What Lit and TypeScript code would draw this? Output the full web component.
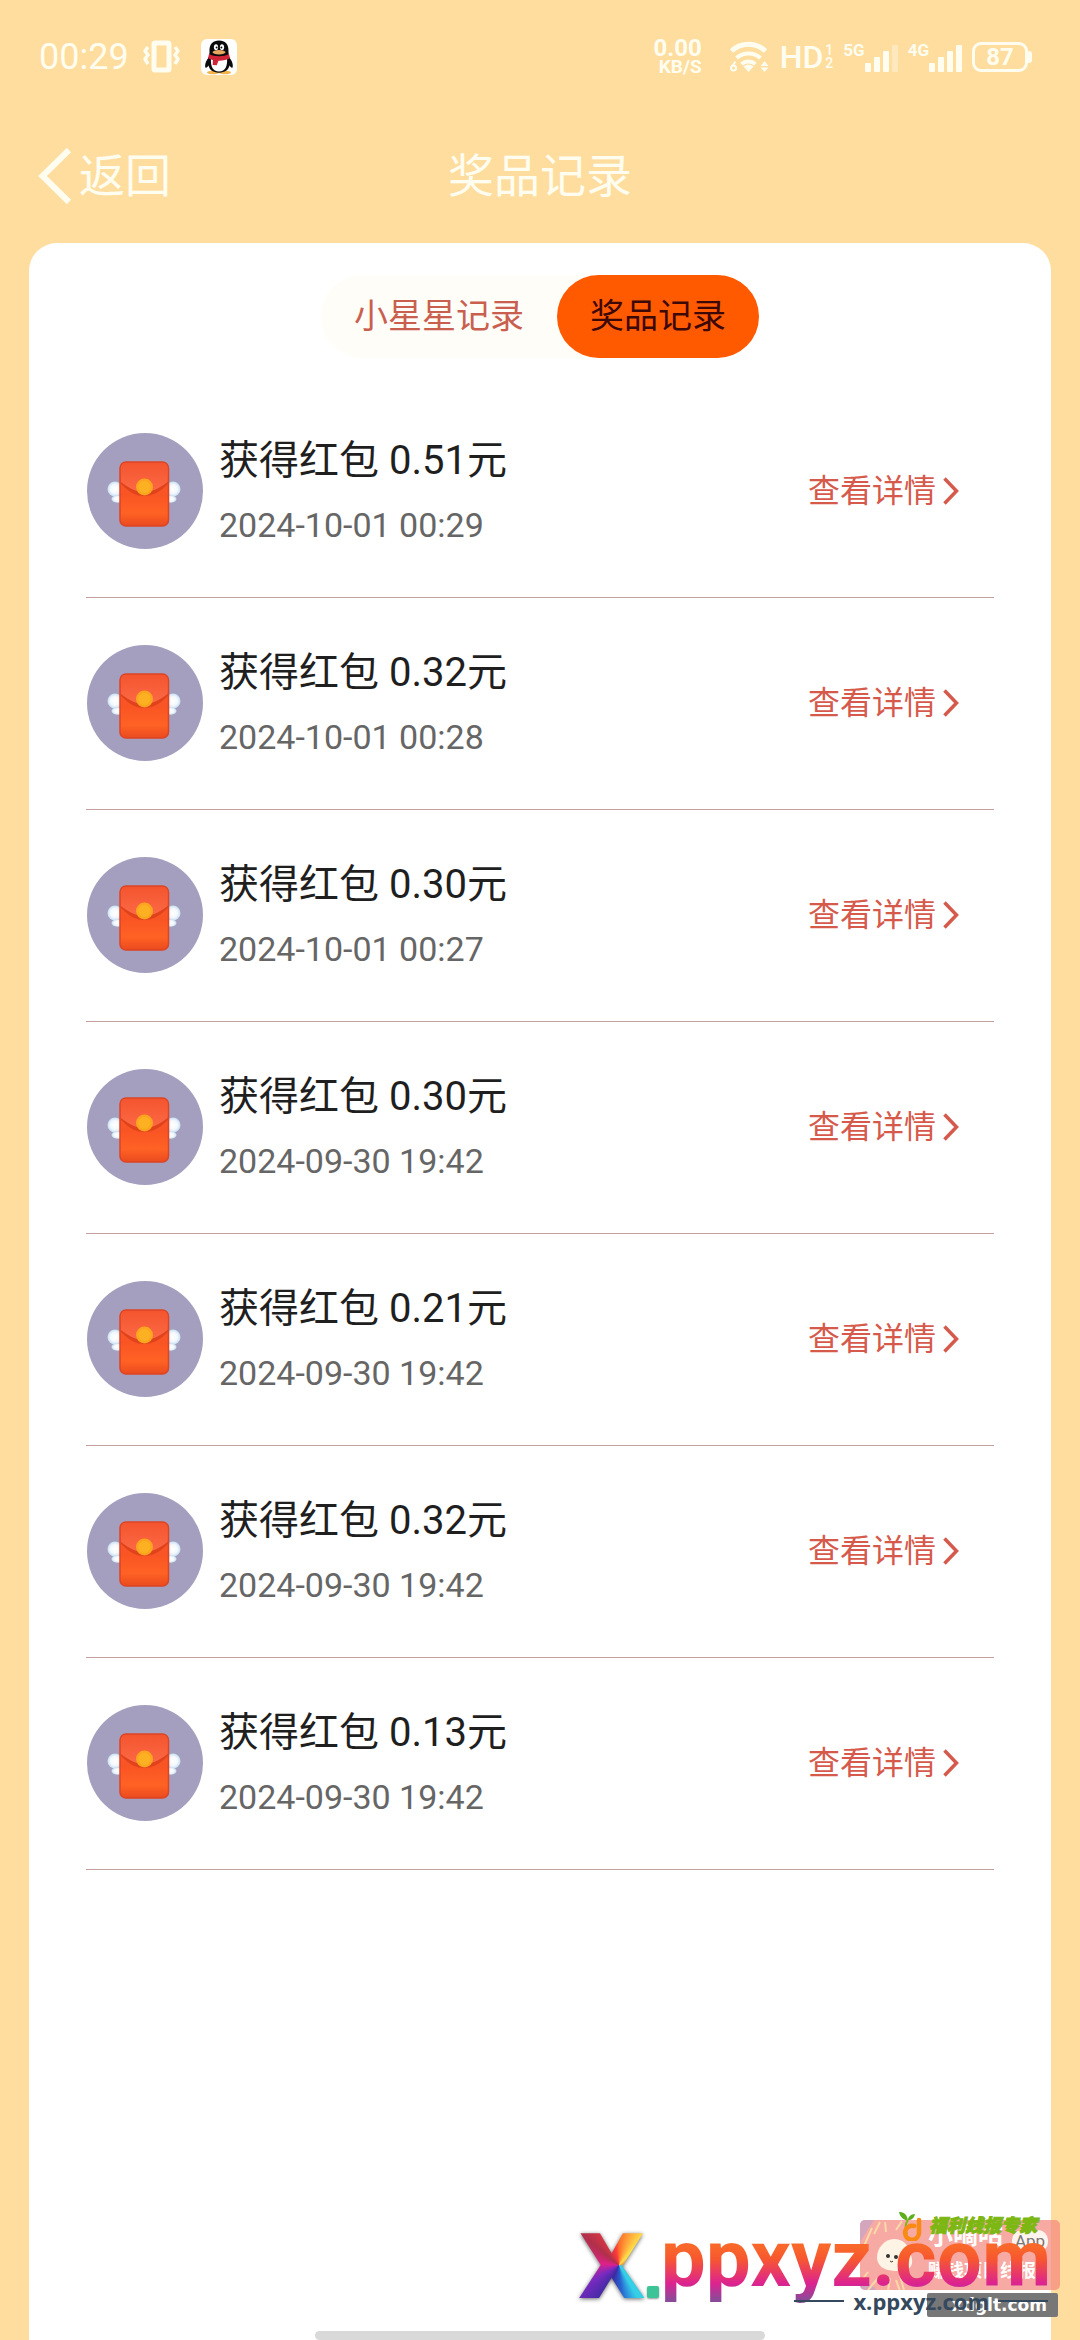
import { LitElement, html, css } from "lit";
import { customElement, property, state } from "lit/decorators.js";
import { classMap } from "lit/directives/class-map.js";

interface PrizeRecord {
  amount: string;
  time: string;
}

const RECORDS: PrizeRecord[] = [
  { amount: "0.51", time: "2024-10-01 00:29" },
  { amount: "0.32", time: "2024-10-01 00:28" },
  { amount: "0.30", time: "2024-10-01 00:27" },
  { amount: "0.30", time: "2024-09-30 19:42" },
  { amount: "0.21", time: "2024-09-30 19:42" },
  { amount: "0.32", time: "2024-09-30 19:42" },
  { amount: "0.13", time: "2024-09-30 19:42" },
];

const TABS = ["小星星记录", "奖品记录"];

@customElement("status-bar")
class StatusBar extends LitElement {
  static styles = css`
    :host {
      display: flex;
      align-items: center;
      box-sizing: border-box;
      height: 114px;
      padding: 0 48px 0 39px;
      color: #fffdf0;
      font-family: Roboto, "Noto Sans CJK SC", sans-serif;
    }
    svg {
      display: block;
      flex: none;
    }
    .time {
      font-size: 36px;
      line-height: 38px;
    }
    .vibrate {
      margin-left: 14px;
    }
    .qq {
      margin-left: 21px;
    }
    .speed {
      margin-left: auto;
      text-align: right;
      font-weight: 700;
      font-size: 24px;
      line-height: 20px;
    }
    .unit {
      display: block;
      font-size: 19px;
      line-height: 18px;
    }
    .wifi {
      margin-left: 27px;
    }
    .hd {
      display: flex;
      align-items: center;
      gap: 2px;
      margin-left: 11px;
      font-weight: 500;
      font-size: 32px;
      line-height: 34px;
    }
    .sims {
      display: flex;
      flex-direction: column;
      font-size: 14px;
      line-height: 13px;
    }
    .signal {
      display: flex;
      align-items: flex-start;
      margin-left: 10px;
      font-weight: 700;
      font-size: 17px;
      line-height: 18px;
    }
    .battery {
      display: flex;
      align-items: center;
      margin-left: 10px;
    }
    .cell {
      box-sizing: border-box;
      width: 56px;
      height: 30px;
      border: 3px solid currentColor;
      border-radius: 9px;
      text-align: center;
      font-weight: 700;
      font-size: 24px;
      line-height: 25px;
    }
    .nub {
      width: 4px;
      height: 12px;
      border-radius: 0 3px 3px 0;
      background: currentColor;
    }
  `;

  private bars(lastOpacity: number) {
    return html`<svg width="33" height="32" viewBox="0 0 33 32" fill="currentColor">
      <rect x="0" y="22" width="6" height="9" rx="1" />
      <rect x="9" y="16" width="6" height="15" rx="1" />
      <rect x="18" y="10" width="6" height="21" rx="1" />
      <rect x="27" y="4" width="6" height="27" rx="1" opacity=${lastOpacity} />
    </svg>`;
  }

  render() {
    return html`
      <span class="time">00:29</span>
      <svg class="vibrate" width="37" height="34" viewBox="0 0 37 34" fill="none" stroke="currentColor">
        <rect x="11" y="3" width="15" height="27" rx="1" stroke-width="5" />
        <path d="M5 7 2 11l3 4-3 4 3 5M32 7l3 4-3 4 3 4-3 5" stroke-width="3.5" stroke-linejoin="round" />
      </svg>
      <svg class="qq" width="36" height="36" viewBox="0 0 36 36">
        <rect width="36" height="36" rx="6" fill="#fff" />
        <ellipse cx="12" cy="33.5" rx="6" ry="1.8" fill="#f2b44b" />
        <ellipse cx="24" cy="33.5" rx="6" ry="1.8" fill="#f2b44b" />
        <path d="M8.500 13C8 5 12 1.500 18 1.500S28 5 27.500 13L28 18c2.500 3 4.500 7 3.600 10.500-.9.800-2.300-.5-3.100-1.900C27.500 31 24 33.700 18 33.700S8.500 31 7.500 26.600c-.8 1.400-2.200 2.700-3.100 1.900C3.500 25 5.500 21 8 18Z" fill="#0b0b0d" />
        <path d="M10 19c-.6 8 1.500 13.500 8 13.500S26.600 27 26 19Z" fill="#fff" />
        <ellipse cx="15" cy="8.300" rx="2.100" ry="3" fill="#fff" />
        <ellipse cx="21" cy="8.300" rx="2.100" ry="3" fill="#fff" />
        <circle cx="15.600" cy="8.600" r="1" fill="#111" />
        <circle cx="20.400" cy="8.600" r="1" fill="#111" />
        <ellipse cx="18" cy="13.300" rx="6.500" ry="2.200" fill="#e8a860" />
        <path d="M8 15c5 3 15 3 20 0l1 4c-3 2.200-7.500 2.800-11.500 2.700l-1.800 4.600-4-.3.200-5C10 20.500 8.300 19.900 7 19Z" fill="#cf2338" />
      </svg>
      <span class="speed">0.00<span class="unit">KB/S</span></span>
      <svg class="wifi" width="40" height="34" viewBox="0 0 40 34" fill="none" stroke="currentColor">
        <path d="M2.500 11a25 25 0 0 1 34 0" stroke-width="5" />
        <path d="M7.500 18a18 18 0 0 1 24 0" stroke-width="4" />
        <path d="M12.500 24a11 11 0 0 1 14 0" stroke-width="4" />
        <path d="M14.500 26.500a8 8 0 0 1 10 0L19.500 32Z" fill="currentColor" stroke="none" />
        <path d="M6.500 21.500 3 26.500" stroke-width="2" />
        <circle cx="4.500" cy="28" r="2.500" stroke-width="2" />
        <path d="m35.500 21 4 5h-8ZM35.500 32l4-4.500h-8Z" fill="currentColor" stroke="none" />
      </svg>
      <span class="hd">HD<span class="sims"><span>1</span><span>2</span></span></span>
      <span class="signal">5G${this.bars(0.4)}</span>
      <span class="signal">4G${this.bars(1)}</span>
      <span class="battery"><span class="cell">87</span><span class="nub"></span></span>
    `;
  }
}

@customElement("prize-row")
class PrizeRow extends LitElement {
  @property() amount = "";
  @property() time = "";

  static styles = css`
    :host {
      display: flex;
      align-items: center;
      gap: 16px;
      padding: 47px 35px 48px 0;
      border-bottom: 1px solid #c4a0a0;
    }
    .badge {
      display: block;
      flex: none;
      margin-left: 1px;
    }
    .info {
      flex: 1;
      min-width: 0;
    }
    .title {
      margin: 0;
      font-weight: 400;
      font-size: 40px;
      line-height: 56px;
      color: #1f1f1f;
    }
    .time {
      display: block;
      margin-top: 12px;
      font-size: 34px;
      line-height: 48px;
      color: #666;
    }
    .detail {
      display: flex;
      align-items: center;
      gap: 7px;
      font-size: 32px;
      line-height: 48px;
      color: #d65a4c;
      text-decoration: none;
    }
  `;

  render() {
    return html`
      <svg class="badge" width="116" height="116" viewBox="0 0 116 116" aria-hidden="true">
        <defs>
          <linearGradient id="body" x1="0" y1="0" x2="0" y2="1">
            <stop offset="0" stop-color="#f8592f" />
            <stop offset="0.5" stop-color="#f95424" />
            <stop offset="0.800" stop-color="#ff6224" />
            <stop offset="1" stop-color="#ea4a1e" />
          </linearGradient>
          <linearGradient id="flap" x1="0" y1="0" x2="0" y2="1">
            <stop offset="0" stop-color="#f4552f" />
            <stop offset="1" stop-color="#fb6a45" />
          </linearGradient>
          <radialGradient id="wing">
            <stop offset="0" stop-color="#fff" />
            <stop offset="0.600" stop-color="#f4f8fc" />
            <stop offset="1" stop-color="#c6def2" />
          </radialGradient>
        </defs>
        <circle cx="58" cy="58" r="58" fill="#a49fbe" />
        <g fill="url(#wing)">
          <circle cx="28" cy="56" r="7.500" />
          <ellipse cx="31" cy="66" rx="6.500" ry="3.800" />
          <circle cx="86" cy="56" r="7.500" />
          <ellipse cx="83" cy="66" rx="6.500" ry="3.800" />
        </g>
        <rect x="33" y="29" width="48.500" height="64" rx="6" fill="url(#body)" stroke="#dc4426" stroke-width="1.500" />
        <path d="M34 48c9 8 17 11 23 11s15-3 24-11v3c-9 9-17 12-24 12s-14-3-23-12Z" fill="#d63c18" opacity="0.700" />
        <path d="M34 35q0-5 5-5h36.500q5 0 5 5v14c-9 7-17 10-23.500 10S43 56 34 49Z" fill="url(#flap)" />
        <circle cx="57.500" cy="54" r="8.500" fill="#fca61f" />
        <circle cx="57.500" cy="54" r="6" fill="#fdb022" />
      </svg>
      <div class="info">
        <h2 class="title">获得红包 ${this.amount}元</h2>
        <time class="time">${this.time}</time>
      </div>
      <a class="detail" href="#detail">
        查看详情
        <svg width="16" height="28" viewBox="0 0 16 28" fill="none" stroke="currentColor" stroke-width="3.5">
          <path d="M1.500 1.500 13.500 14 1.500 26.500" />
        </svg>
      </a>
    `;
  }
}

@customElement("site-watermark")
class SiteWatermark extends LitElement {
  static styles = css`
    :host {
      position: absolute;
      right: 20px;
      bottom: 22px;
      width: 483px;
      height: 110px;
      pointer-events: none;
      white-space: nowrap;
      font-family: Roboto, "Noto Sans CJK SC", sans-serif;
    }
    .promo,
    .brand,
    .host,
    .big,
    .sub {
      position: absolute;
    }
    .promo {
      right: 0;
      top: 12px;
      width: 200px;
      height: 70px;
      border-radius: 5px;
      overflow: hidden;
      background: rgba(244, 134, 124, 0.7);
    }
    .art {
      position: absolute;
      left: 0;
      top: 0;
    }
    .name,
    .slogan {
      position: absolute;
      left: 68px;
      color: #fff;
      font-weight: 700;
    }
    .name {
      top: 0;
      font-size: 25px;
      line-height: 32px;
    }
    .slogan {
      top: 38px;
      font-size: 18px;
      line-height: 26px;
    }
    .app {
      position: absolute;
      left: 152px;
      top: 10px;
      width: 36px;
      border-radius: 10px;
      background: #fff3ee;
      color: #777;
      text-align: center;
      font-size: 17px;
      line-height: 22px;
    }
    .brand {
      right: 23px;
      top: 3px;
      display: flex;
      align-items: center;
      gap: 6px;
      color: #7db713;
      font-size: 18px;
      line-height: 26px;
      font-weight: 900;
      font-style: italic;
      -webkit-text-stroke: 1px currentColor;
    }
    .brand svg {
      display: block;
    }
    .host {
      right: 2px;
      top: 85px;
      box-sizing: border-box;
      width: 131px;
      padding-right: 11px;
      border-radius: 2px;
      background: #777;
      color: #fff;
      text-align: right;
      font: 700 17px/24px "DejaVu Sans", sans-serif;
    }
    .big {
      left: 0;
      top: 0;
      display: flex;
      align-items: baseline;
      font-weight: 700;
    }
    .x {
      padding: 0 2px;
      background: conic-gradient(from 0deg at 60% 52%, #ff6a2a, #ffe14a 40deg, #f0a040 70deg, #35c8d8 110deg, #35d0e8 150deg, #2860d0 175deg, #3a2aa0 205deg, #7a2ac0 240deg, #e0208a 275deg, #b0304a 310deg, #ff3a3a 350deg, #ff6a2a);
      -webkit-background-clip: text;
      background-clip: text;
      color: transparent;
      font: 800 91px/110px "Open Sans", sans-serif;
      filter: drop-shadow(0 1px 2px rgba(0, 0, 0, 0.6));
    }
    .dot {
      width: 12px;
      height: 12px;
      border-radius: 2px;
      background: #3cc498;
      box-shadow: 0 1px 2px rgba(0, 0, 0, 0.4);
    }
    .word {
      align-self: flex-start;
      margin-left: 2px;
      background: linear-gradient(#f9682a 38%, #f7572f 50%, #dc2390 74%, #8a4a98 90%);
      -webkit-background-clip: text;
      background-clip: text;
      color: transparent;
      font-size: 80px;
      line-height: 102px;
    }
    .sub {
      right: 12px;
      top: 78px;
      display: flex;
      align-items: center;
      gap: 9px;
      color: #34495e;
      font: 700 22px/30px "Open Sans", sans-serif;
    }
    .rule {
      width: 50px;
      height: 2px;
      background: currentColor;
    }
  `;

  render() {
    return html`
      <div class="promo">
        <svg class="art" width="60" height="72" viewBox="0 0 60 72">
          <path d="M0 0h14L0 22ZM0 62c8 0 14 4 18 10H0Z" fill="#c3a4c8" opacity="0.700" />
          <path d="M4 26 12 8M14 14 20 2M26 12 25 2M36 10 42 1M8 52l-6 8M18 58 8 70M30 58l-2 13M40 56l4 14M36 60l4 11" stroke="#fbd9a6" stroke-width="2" fill="none" />
          <path d="M17 37c0-9 8-18 17-18s13 5 16 13 4 16-5 18-28 2-28-13Z" fill="#fdf4e6" />
          <circle cx="28" cy="36" r="2" fill="#333" />
          <circle cx="36" cy="37" r="2" fill="#333" />
          <path d="M30 41q2 2 3 0" stroke="#333" fill="none" />
        </svg>
        <span class="name">小嘀咕</span>
        <span class="app">App</span>
        <span class="slogan">赚钱项目线报</span>
      </div>
      <div class="big"><span class="x">X</span><span class="dot"></span><span class="word">ppxyz.com</span></div>
      <div class="brand">
        <svg width="24" height="30" viewBox="0 0 24 30">
          <path d="M9 10C6 9 1 7 0 1c5 0 8 2 9 9ZM9 9c0-3 3-6 7-6-1 4-3 6-7 6Z" fill="#5fae1e" />
          <path d="M9 9c-3 4-3 9-1 14" stroke="#7db713" stroke-width="2" fill="none" />
          <path d="M20 9v12a7 7 0 1 1-5-6" stroke="#fb8a14" stroke-width="4.500" stroke-linecap="round" fill="none" />
        </svg>
        福利线报专家
      </div>
      <div class="host">xdglt.com</div>
      <div class="sub"><span class="rule"></span>x.ppxyz.com<span class="rule"></span></div>
    `;
  }
}

@customElement("app-root")
class AppRoot extends LitElement {
  @state() private active = 1;

  static styles = css`
    :host {
      position: relative;
      display: flex;
      flex-direction: column;
      box-sizing: border-box;
      min-height: 100vh;
      overflow: hidden;
      background: #fedd9f;
      font-family: Roboto, "Noto Sans CJK SC", sans-serif;
    }
    .header {
      display: grid;
      grid-template-columns: 1fr auto 1fr;
      align-items: center;
      box-sizing: border-box;
      height: 129px;
      padding: 0 38px 6px;
      color: #fffdf0;
      font-size: 46px;
      line-height: 64px;
    }
    .back {
      display: flex;
      align-items: center;
      gap: 7px;
      justify-self: start;
      padding: 0;
      border: 0;
      background: none;
      color: inherit;
      font: inherit;
      cursor: pointer;
    }
    .title {
      margin: 0;
      font: inherit;
    }
    .card {
      flex: 1;
      margin: 0 29px;
      padding: 32px 57px 60px;
      border-radius: 28px 28px 0 0;
      background: #fff;
    }
    .tabs {
      display: flex;
      width: fit-content;
      margin: 0 auto;
      border-radius: 42px;
      background: #fffdf8;
    }
    .tab {
      padding: 0 33px;
      border: 0;
      border-radius: 42px;
      background: none;
      color: #c9604f;
      font: inherit;
      font-size: 34px;
      line-height: 83px;
      cursor: pointer;
    }
    .tab.active {
      background: #ff5a00;
      color: #3c0808;
    }
    .list {
      margin: 28px 0 0;
      padding: 0;
      list-style: none;
    }
    .home {
      position: absolute;
      left: 50%;
      bottom: 0;
      width: 450px;
      height: 9px;
      margin-left: -225px;
      border-radius: 5px;
      background: #d9d9d9;
    }
  `;

  render() {
    return html`
      <status-bar></status-bar>
      <header class="header">
        <button class="back" type="button">
          <svg width="34" height="58" viewBox="0 0 34 58" fill="none" stroke="currentColor" stroke-width="6">
            <path d="M31 3 4.500 29 31 55" />
          </svg>
          返回
        </button>
        <h1 class="title">奖品记录</h1>
      </header>
      <main class="card">
        <nav class="tabs">
          ${TABS.map(
            (label, i) => html`<button
              type="button"
              class=${classMap({ tab: true, active: i === this.active })}
              @click=${() => (this.active = i)}
            >${label}</button>`
          )}
        </nav>
        <ul class="list">
          ${RECORDS.map((r) => html`<li><prize-row .amount=${r.amount} .time=${r.time}></prize-row></li>`)}
        </ul>
      </main>
      <div class="home"></div>
      <site-watermark></site-watermark>
    `;
  }
}
